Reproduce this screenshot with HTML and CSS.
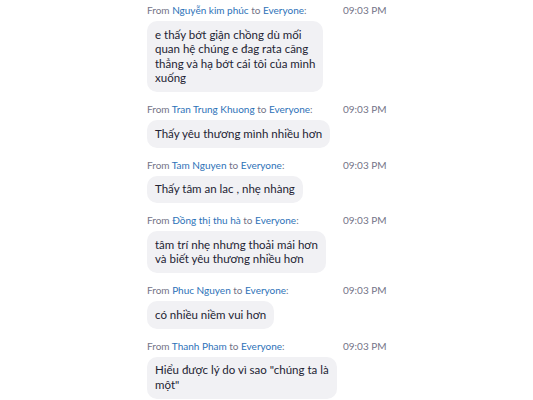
FILE: index.html
```html
<!DOCTYPE html>
<html lang="vi">
<head>
    <meta charset="UTF-8">
    <meta name="viewport" content="width=device-width, initial-scale=1.0">
    <title>Chat</title>
    <link rel="stylesheet" href="styles.css">
</head>
<body>
    <div class="chat">
        <div class="message">
            <div class="meta">
                <span class="from">From <span class="name">Nguyễn kim phúc</span> to <span class="name">Everyone</span>:</span>
                <span class="time">09:03 PM</span>
            </div>
            <div class="bubble">e thấy bớt giận chồng dù mối<br>quan hệ chúng e đag rata căng<br>thẳng và hạ bớt cái tôi của mình<br>xuống</div>
        </div>
        <div class="message">
            <div class="meta">
                <span class="from">From <span class="name">Tran Trung Khuong</span> to <span class="name">Everyone</span>:</span>
                <span class="time">09:03 PM</span>
            </div>
            <div class="bubble">Thấy yêu thương mình nhiều hơn</div>
        </div>
        <div class="message">
            <div class="meta">
                <span class="from">From <span class="name">Tam Nguyen</span> to <span class="name">Everyone</span>:</span>
                <span class="time">09:03 PM</span>
            </div>
            <div class="bubble">Thấy tâm an lac , nhẹ nhàng</div>
        </div>
        <div class="message">
            <div class="meta">
                <span class="from">From <span class="name">Đồng thị thu hà</span> to <span class="name">Everyone</span>:</span>
                <span class="time">09:03 PM</span>
            </div>
            <div class="bubble">tâm trí nhẹ nhưng thoải mái hơn<br>và biết yêu thương nhiều hơn</div>
        </div>
        <div class="message">
            <div class="meta">
                <span class="from">From <span class="name">Phuc Nguyen</span> to <span class="name">Everyone</span>:</span>
                <span class="time">09:03 PM</span>
            </div>
            <div class="bubble">có nhiều niềm vui hơn</div>
        </div>
        <div class="message">
            <div class="meta">
                <span class="from">From <span class="name">Thanh Pham</span> to <span class="name">Everyone</span>:</span>
                <span class="time">09:03 PM</span>
            </div>
            <div class="bubble">Hiểu được lý do vì sao "chúng ta là<br>một"</div>
        </div>
    </div>
</body>
</html>
```

FILE: styles.css
```css
body {
    margin: 0;
    background-color: #fff;
    font-family: Lato, "Noto Sans", sans-serif;
    color: #232333;
}

.chat {
    padding: 2px 0 0 147px;
}

.message {
    display: flex;
    flex-direction: column;
    align-items: flex-start;
    padding-bottom: 9px;
}

.meta {
    display: grid;
    grid-template-columns: 196px auto;
    font-size: 10px;
    line-height: 16px;
    color: #747487;
    margin-bottom: 3px;
}

.name {
    color: #2d72b8;
}

.time {
    color: #747487;
}

.bubble {
    max-width: 180px;
    background-color: #f1f1f4;
    border-radius: 10px;
    padding: 6.5px 8px;
    font-size: 11.5px;
    line-height: 14.5px;
}
```
